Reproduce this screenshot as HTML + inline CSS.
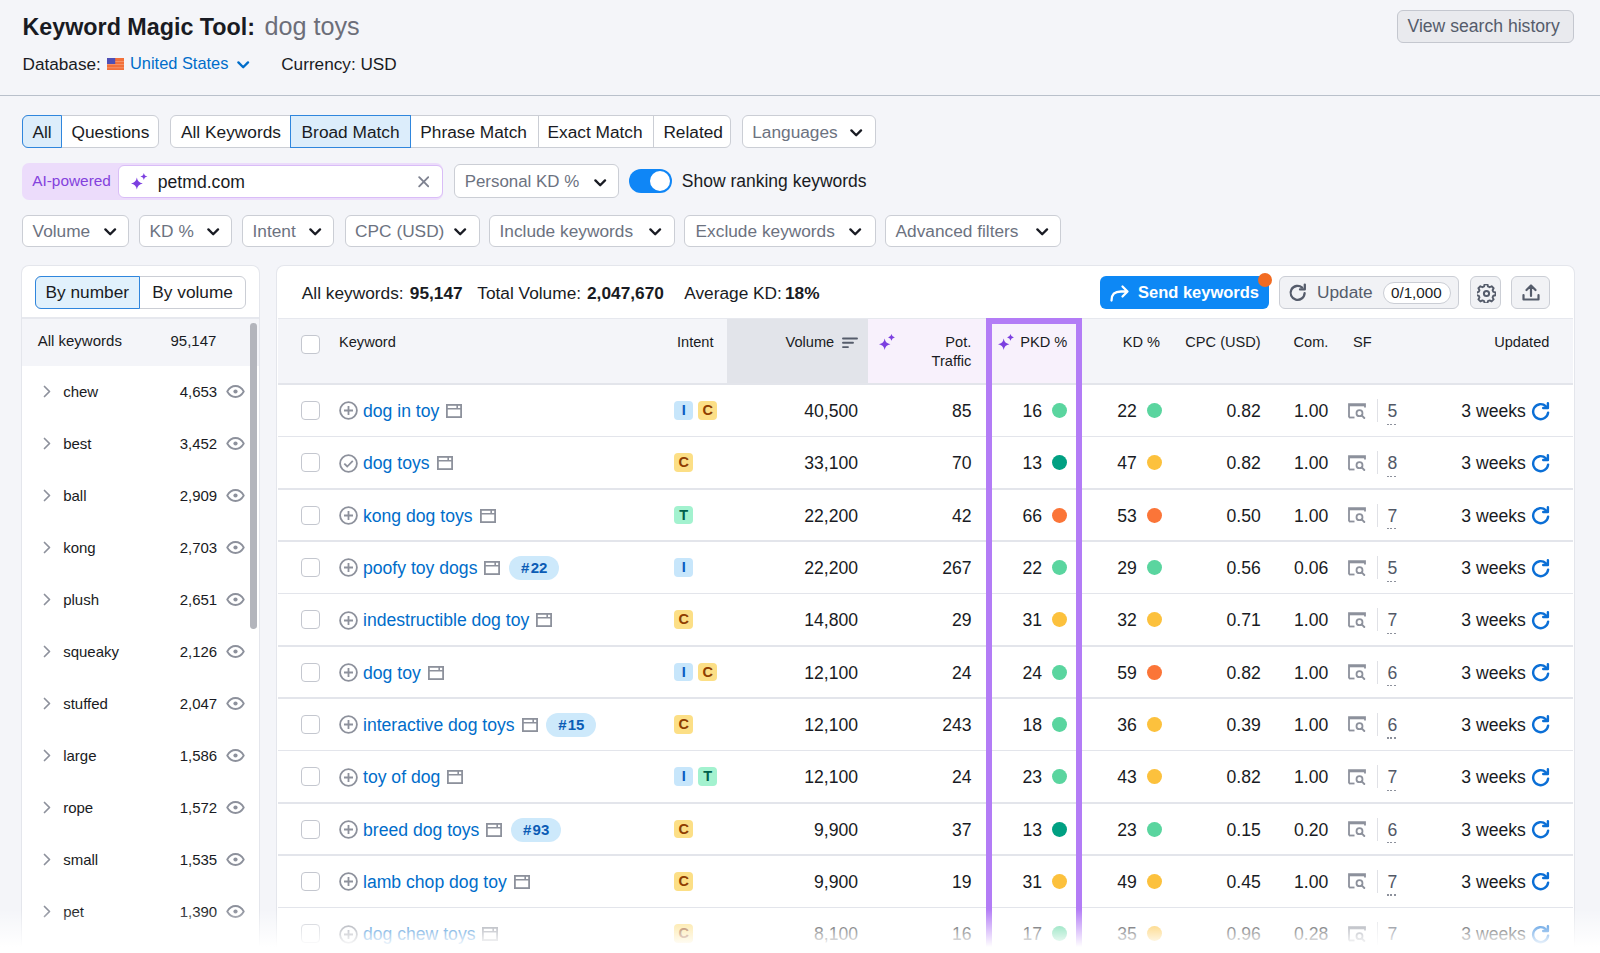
<!DOCTYPE html>
<html><head><meta charset="utf-8"><title>Keyword Magic Tool</title>
<style>
html,body{margin:0;padding:0;}
body{width:1600px;height:953px;overflow:hidden;position:relative;background:#f4f5f9;font-family:"Liberation Sans",sans-serif;color:#191b23;}
.t{position:absolute;white-space:nowrap;line-height:1;}
.b{position:absolute;}
.ib{width:18.7px;height:18.7px;border-radius:4px;font-size:14.5px;font-weight:bold;line-height:19.5px;text-align:center;}
.serp{margin-left:7px;vertical-align:-1px}
.kb{position:relative;display:inline-block;width:58.9px;height:0}
.kb i{position:absolute;left:8.6px;top:-17.9px;width:50.3px;height:23.7px;border-radius:12px;background:#cde9fb;color:#0b5cb5;font-size:15px;font-weight:bold;font-style:normal;text-align:center;line-height:24.5px}
</style></head><body>
<div class="t" style="left:22.50px;top:16.00px;font-size:23.3px;color:#191b23;font-weight:bold;">Keyword Magic Tool:</div>
<div class="t" style="left:264.50px;top:14.00px;font-size:25.2px;color:#6c6e79;">dog toys</div>
<div class="t" style="left:22.50px;top:56.00px;font-size:17.2px;color:#191b23;">Database:</div>
<svg class="b" style="left:107.00px;top:58.00px" width="17" height="12" viewBox="0 0 17 12"><rect width="17" height="12" fill="#f2703a"/><rect y="3" width="17" height="0.8" fill="#f59a72"/><rect y="6.2" width="17" height="0.8" fill="#f59a72"/><rect y="9.4" width="17" height="0.8" fill="#f59a72"/><rect width="8.2" height="6" fill="#4f4fb5"/></svg>
<div class="t" style="left:130.00px;top:55.00px;font-size:16.4px;color:#006dca;">United States</div>
<svg class="b" style="left:236.50px;top:61.00px" width="13" height="8" viewBox="0 0 13 8"><path d="M1.4 1.4 L6.2 6.2 L11 1.4" fill="none" stroke="#006dca" stroke-width="2.3" stroke-linecap="round" stroke-linejoin="round"/></svg>
<div class="t" style="left:281.20px;top:56.00px;font-size:17.2px;color:#191b23;">Currency: USD</div>
<div class="b" style="left:1396.50px;top:10.30px;width:177.00px;height:32.30px;background:#e9eaee;border:1px solid #c4c7cf;border-radius:6px;box-sizing:border-box"></div>
<div class="t" style="left:1407.50px;top:18.00px;font-size:17.6px;color:#555c6b;">View search history</div>
<div class="b" style="left:0.00px;top:94.80px;width:1600.00px;height:1.50px;background:#b9c0cb"></div>
<div class="b" style="left:22.20px;top:115.20px;width:137.30px;height:33.30px;background:#fff;border:1px solid #cbced5;border-radius:6px;box-sizing:border-box"></div>
<div class="b" style="left:22.20px;top:115.20px;width:39.80px;height:33.30px;background:#dcedfb;border:1.5px solid #2f86dd;border-radius:6px 0 0 6px;box-sizing:border-box"></div>
<div class="t" style="left:32.50px;top:124.00px;font-size:17.3px;color:#191b23;">All</div>
<div class="t" style="left:71.50px;top:124.00px;font-size:17.3px;color:#191b23;">Questions</div>
<div class="b" style="left:169.80px;top:115.20px;width:561.50px;height:33.30px;background:#fff;border:1px solid #cbced5;border-radius:6px;box-sizing:border-box"></div>
<div class="b" style="left:290.30px;top:115.20px;width:120.40px;height:33.30px;background:#dcedfb;border:1.5px solid #2f86dd;box-sizing:border-box"></div>
<div class="b" style="left:537.50px;top:115.20px;width:1.00px;height:33.30px;background:#cbced5"></div>
<div class="b" style="left:653.00px;top:115.20px;width:1.00px;height:33.30px;background:#cbced5"></div>
<div class="t" style="left:181.00px;top:124.00px;font-size:17.3px;color:#191b23;">All Keywords</div>
<div class="t" style="left:301.60px;top:124.00px;font-size:17.3px;color:#191b23;">Broad Match</div>
<div class="t" style="left:420.30px;top:124.00px;font-size:17.3px;color:#191b23;">Phrase Match</div>
<div class="t" style="left:547.50px;top:124.00px;font-size:17.3px;color:#191b23;">Exact Match</div>
<div class="t" style="left:663.40px;top:124.00px;font-size:17.3px;color:#191b23;">Related</div>
<div class="b" style="left:741.60px;top:115.20px;width:134.40px;height:33.30px;background:#fff;border:1px solid #cbced5;border-radius:6px;box-sizing:border-box"></div>
<div class="t" style="left:752.20px;top:124.00px;font-size:17.3px;color:#6c727f;">Languages</div>
<svg class="b" style="left:850.00px;top:129.00px" width="13" height="8" viewBox="0 0 13 8"><path d="M1.4 1.4 L6.2 6.2 L11 1.4" fill="none" stroke="#191b23" stroke-width="2.3" stroke-linecap="round" stroke-linejoin="round"/></svg>
<div class="b" style="left:22.20px;top:162.50px;width:420.80px;height:37.50px;background:#ecdcfb;border-radius:7px"></div>
<div class="t" style="left:32.20px;top:173.00px;font-size:15.4px;color:#8442dd;">AI-powered</div>
<div class="b" style="left:118.40px;top:165.30px;width:324.60px;height:32.50px;background:#fff;border:1.5px solid #d9bdf7;border-radius:6px;box-sizing:border-box"></div>
<svg class="b" style="left:130.50px;top:173.20px" width="17" height="17" viewBox="0 0 16 16"><path d="M5.50 4.30 Q6.25 9.15 11.10 9.90 Q6.25 10.65 5.50 15.50 Q4.75 10.65 -0.10 9.90 Q4.75 9.15 5.50 4.30Z M12.10 0.00 Q12.55 2.85 15.40 3.30 Q12.55 3.75 12.10 6.60 Q11.65 3.75 8.80 3.30 Q11.65 2.85 12.10 0.00Z" fill="#7c3fe0"/></svg>
<div class="t" style="left:157.80px;top:174.00px;font-size:17.6px;color:#191b23;">petmd.com</div>
<svg class="b" style="left:417.50px;top:176.00px" width="11.5" height="11.5" viewBox="0 0 11.5 11.5"><path d="M1.2 1.2 L10.3 10.3 M10.3 1.2 L1.2 10.3" stroke="#7f8391" stroke-width="1.9" stroke-linecap="round"/></svg>
<div class="b" style="left:453.80px;top:164.40px;width:165.60px;height:33.40px;background:#fff;border:1px solid #cbced5;border-radius:6px;box-sizing:border-box"></div>
<div class="t" style="left:464.70px;top:174.00px;font-size:16.9px;color:#6c727f;">Personal KD %</div>
<svg class="b" style="left:594.00px;top:179.00px" width="13" height="8" viewBox="0 0 13 8"><path d="M1.4 1.4 L6.2 6.2 L11 1.4" fill="none" stroke="#191b23" stroke-width="2.3" stroke-linecap="round" stroke-linejoin="round"/></svg>
<div class="b" style="left:628.90px;top:169.40px;width:42.80px;height:23.40px;background:#0f86f6;border-radius:12px"></div>
<div class="b" style="left:650.00px;top:170.60px;width:20.40px;height:20.30px;background:#fff;border-radius:50%"></div>
<div class="t" style="left:681.75px;top:173.00px;font-size:17.5px;color:#191b23;">Show ranking keywords</div>
<div class="b" style="left:22.40px;top:214.60px;width:107.10px;height:32.90px;background:#fff;border:1px solid #cbced5;border-radius:6px;box-sizing:border-box"></div>
<div class="t" style="left:32.60px;top:223.00px;font-size:17.3px;color:#6c727f;">Volume</div>
<svg class="b" style="left:104.00px;top:228.00px" width="13" height="8" viewBox="0 0 13 8"><path d="M1.4 1.4 L6.2 6.2 L11 1.4" fill="none" stroke="#191b23" stroke-width="2.3" stroke-linecap="round" stroke-linejoin="round"/></svg>
<div class="b" style="left:139.10px;top:214.60px;width:93.00px;height:32.90px;background:#fff;border:1px solid #cbced5;border-radius:6px;box-sizing:border-box"></div>
<div class="t" style="left:149.60px;top:223.00px;font-size:17.3px;color:#6c727f;">KD %</div>
<svg class="b" style="left:206.50px;top:228.00px" width="13" height="8" viewBox="0 0 13 8"><path d="M1.4 1.4 L6.2 6.2 L11 1.4" fill="none" stroke="#191b23" stroke-width="2.3" stroke-linecap="round" stroke-linejoin="round"/></svg>
<div class="b" style="left:242.00px;top:214.60px;width:92.40px;height:32.90px;background:#fff;border:1px solid #cbced5;border-radius:6px;box-sizing:border-box"></div>
<div class="t" style="left:252.50px;top:223.00px;font-size:17.3px;color:#6c727f;">Intent</div>
<svg class="b" style="left:308.50px;top:228.00px" width="13" height="8" viewBox="0 0 13 8"><path d="M1.4 1.4 L6.2 6.2 L11 1.4" fill="none" stroke="#191b23" stroke-width="2.3" stroke-linecap="round" stroke-linejoin="round"/></svg>
<div class="b" style="left:344.60px;top:214.60px;width:135.00px;height:32.90px;background:#fff;border:1px solid #cbced5;border-radius:6px;box-sizing:border-box"></div>
<div class="t" style="left:355.10px;top:223.00px;font-size:17.3px;color:#6c727f;">CPC (USD)</div>
<svg class="b" style="left:453.50px;top:228.00px" width="13" height="8" viewBox="0 0 13 8"><path d="M1.4 1.4 L6.2 6.2 L11 1.4" fill="none" stroke="#191b23" stroke-width="2.3" stroke-linecap="round" stroke-linejoin="round"/></svg>
<div class="b" style="left:489.40px;top:214.60px;width:185.60px;height:32.90px;background:#fff;border:1px solid #cbced5;border-radius:6px;box-sizing:border-box"></div>
<div class="t" style="left:499.50px;top:223.00px;font-size:17.3px;color:#6c727f;">Include keywords</div>
<svg class="b" style="left:648.70px;top:228.00px" width="13" height="8" viewBox="0 0 13 8"><path d="M1.4 1.4 L6.2 6.2 L11 1.4" fill="none" stroke="#191b23" stroke-width="2.3" stroke-linecap="round" stroke-linejoin="round"/></svg>
<div class="b" style="left:684.40px;top:214.60px;width:191.20px;height:32.90px;background:#fff;border:1px solid #cbced5;border-radius:6px;box-sizing:border-box"></div>
<div class="t" style="left:695.60px;top:223.00px;font-size:17.3px;color:#6c727f;">Exclude keywords</div>
<svg class="b" style="left:849.30px;top:228.00px" width="13" height="8" viewBox="0 0 13 8"><path d="M1.4 1.4 L6.2 6.2 L11 1.4" fill="none" stroke="#191b23" stroke-width="2.3" stroke-linecap="round" stroke-linejoin="round"/></svg>
<div class="b" style="left:885.00px;top:214.60px;width:176.20px;height:32.90px;background:#fff;border:1px solid #cbced5;border-radius:6px;box-sizing:border-box"></div>
<div class="t" style="left:895.50px;top:223.00px;font-size:17.3px;color:#6c727f;">Advanced filters</div>
<svg class="b" style="left:1035.50px;top:228.00px" width="13" height="8" viewBox="0 0 13 8"><path d="M1.4 1.4 L6.2 6.2 L11 1.4" fill="none" stroke="#191b23" stroke-width="2.3" stroke-linecap="round" stroke-linejoin="round"/></svg>
<div class="b" style="left:22.00px;top:266.40px;width:236.50px;height:733.60px;background:#fff;border-radius:7px;box-shadow:0 0 0 1px #e4e6ec"></div>
<div class="b" style="left:34.80px;top:275.90px;width:211.00px;height:33.10px;background:#fff;border:1px solid #cbced5;border-radius:6px;box-sizing:border-box"></div>
<div class="b" style="left:34.80px;top:275.90px;width:105.70px;height:33.10px;background:#e1f1fc;border:1.5px solid #2f86dd;border-radius:6px 0 0 6px;box-sizing:border-box"></div>
<div class="t" style="left:45.50px;top:284.00px;font-size:17.3px;color:#191b23;">By number</div>
<div class="t" style="left:152.30px;top:284.00px;font-size:17.3px;color:#191b23;">By volume</div>
<div class="b" style="left:22.00px;top:317.00px;width:236.50px;height:2.00px;background:#e6e8ee"></div>
<div class="b" style="left:22.00px;top:319.00px;width:236.50px;height:46.70px;background:#f4f5f9"></div>
<div class="t" style="left:37.70px;top:333.00px;font-size:15.0px;color:#191b23;">All keywords</div>
<div class="t" style="right:1383.60px;top:333.00px;font-size:15.0px;color:#191b23;">95,147</div>
<div class="b" style="left:250.30px;top:322.60px;width:6.70px;height:306.40px;background:#b3b5bc;border-radius:3.4px"></div>
<svg class="b" style="left:42.50px;top:385.00px" width="8" height="13" viewBox="0 0 8 13"><path d="M1.5 1.5 L6.5 6.5 L1.5 11.5" fill="none" stroke="#8d919c" stroke-width="1.7" stroke-linecap="round" stroke-linejoin="round"/></svg>
<div class="t" style="left:63.20px;top:384.00px;font-size:15.0px;color:#191b23;">chew</div>
<div class="t" style="right:1382.80px;top:384.00px;font-size:15.0px;color:#191b23;">4,653</div>
<svg class="b" style="left:225.50px;top:385.00px" width="19" height="13" viewBox="0 0 19 13"><path d="M1.2 6.5 C3.6 2.4 6.4 1 9.5 1 C12.6 1 15.4 2.4 17.8 6.5 C15.4 10.6 12.6 12 9.5 12 C6.4 12 3.6 10.6 1.2 6.5Z" fill="none" stroke="#8d919c" stroke-width="1.8" stroke-linejoin="round"/><circle cx="9.5" cy="6.5" r="2.1" fill="#8d919c"/></svg>
<svg class="b" style="left:42.50px;top:437.00px" width="8" height="13" viewBox="0 0 8 13"><path d="M1.5 1.5 L6.5 6.5 L1.5 11.5" fill="none" stroke="#8d919c" stroke-width="1.7" stroke-linecap="round" stroke-linejoin="round"/></svg>
<div class="t" style="left:63.20px;top:436.00px;font-size:15.0px;color:#191b23;">best</div>
<div class="t" style="right:1382.80px;top:436.00px;font-size:15.0px;color:#191b23;">3,452</div>
<svg class="b" style="left:225.50px;top:437.00px" width="19" height="13" viewBox="0 0 19 13"><path d="M1.2 6.5 C3.6 2.4 6.4 1 9.5 1 C12.6 1 15.4 2.4 17.8 6.5 C15.4 10.6 12.6 12 9.5 12 C6.4 12 3.6 10.6 1.2 6.5Z" fill="none" stroke="#8d919c" stroke-width="1.8" stroke-linejoin="round"/><circle cx="9.5" cy="6.5" r="2.1" fill="#8d919c"/></svg>
<svg class="b" style="left:42.50px;top:489.00px" width="8" height="13" viewBox="0 0 8 13"><path d="M1.5 1.5 L6.5 6.5 L1.5 11.5" fill="none" stroke="#8d919c" stroke-width="1.7" stroke-linecap="round" stroke-linejoin="round"/></svg>
<div class="t" style="left:63.20px;top:488.00px;font-size:15.0px;color:#191b23;">ball</div>
<div class="t" style="right:1382.80px;top:488.00px;font-size:15.0px;color:#191b23;">2,909</div>
<svg class="b" style="left:225.50px;top:489.00px" width="19" height="13" viewBox="0 0 19 13"><path d="M1.2 6.5 C3.6 2.4 6.4 1 9.5 1 C12.6 1 15.4 2.4 17.8 6.5 C15.4 10.6 12.6 12 9.5 12 C6.4 12 3.6 10.6 1.2 6.5Z" fill="none" stroke="#8d919c" stroke-width="1.8" stroke-linejoin="round"/><circle cx="9.5" cy="6.5" r="2.1" fill="#8d919c"/></svg>
<svg class="b" style="left:42.50px;top:541.00px" width="8" height="13" viewBox="0 0 8 13"><path d="M1.5 1.5 L6.5 6.5 L1.5 11.5" fill="none" stroke="#8d919c" stroke-width="1.7" stroke-linecap="round" stroke-linejoin="round"/></svg>
<div class="t" style="left:63.20px;top:540.00px;font-size:15.0px;color:#191b23;">kong</div>
<div class="t" style="right:1382.80px;top:540.00px;font-size:15.0px;color:#191b23;">2,703</div>
<svg class="b" style="left:225.50px;top:541.00px" width="19" height="13" viewBox="0 0 19 13"><path d="M1.2 6.5 C3.6 2.4 6.4 1 9.5 1 C12.6 1 15.4 2.4 17.8 6.5 C15.4 10.6 12.6 12 9.5 12 C6.4 12 3.6 10.6 1.2 6.5Z" fill="none" stroke="#8d919c" stroke-width="1.8" stroke-linejoin="round"/><circle cx="9.5" cy="6.5" r="2.1" fill="#8d919c"/></svg>
<svg class="b" style="left:42.50px;top:593.00px" width="8" height="13" viewBox="0 0 8 13"><path d="M1.5 1.5 L6.5 6.5 L1.5 11.5" fill="none" stroke="#8d919c" stroke-width="1.7" stroke-linecap="round" stroke-linejoin="round"/></svg>
<div class="t" style="left:63.20px;top:592.00px;font-size:15.0px;color:#191b23;">plush</div>
<div class="t" style="right:1382.80px;top:592.00px;font-size:15.0px;color:#191b23;">2,651</div>
<svg class="b" style="left:225.50px;top:593.00px" width="19" height="13" viewBox="0 0 19 13"><path d="M1.2 6.5 C3.6 2.4 6.4 1 9.5 1 C12.6 1 15.4 2.4 17.8 6.5 C15.4 10.6 12.6 12 9.5 12 C6.4 12 3.6 10.6 1.2 6.5Z" fill="none" stroke="#8d919c" stroke-width="1.8" stroke-linejoin="round"/><circle cx="9.5" cy="6.5" r="2.1" fill="#8d919c"/></svg>
<svg class="b" style="left:42.50px;top:645.00px" width="8" height="13" viewBox="0 0 8 13"><path d="M1.5 1.5 L6.5 6.5 L1.5 11.5" fill="none" stroke="#8d919c" stroke-width="1.7" stroke-linecap="round" stroke-linejoin="round"/></svg>
<div class="t" style="left:63.20px;top:644.00px;font-size:15.0px;color:#191b23;">squeaky</div>
<div class="t" style="right:1382.80px;top:644.00px;font-size:15.0px;color:#191b23;">2,126</div>
<svg class="b" style="left:225.50px;top:645.00px" width="19" height="13" viewBox="0 0 19 13"><path d="M1.2 6.5 C3.6 2.4 6.4 1 9.5 1 C12.6 1 15.4 2.4 17.8 6.5 C15.4 10.6 12.6 12 9.5 12 C6.4 12 3.6 10.6 1.2 6.5Z" fill="none" stroke="#8d919c" stroke-width="1.8" stroke-linejoin="round"/><circle cx="9.5" cy="6.5" r="2.1" fill="#8d919c"/></svg>
<svg class="b" style="left:42.50px;top:697.00px" width="8" height="13" viewBox="0 0 8 13"><path d="M1.5 1.5 L6.5 6.5 L1.5 11.5" fill="none" stroke="#8d919c" stroke-width="1.7" stroke-linecap="round" stroke-linejoin="round"/></svg>
<div class="t" style="left:63.20px;top:696.00px;font-size:15.0px;color:#191b23;">stuffed</div>
<div class="t" style="right:1382.80px;top:696.00px;font-size:15.0px;color:#191b23;">2,047</div>
<svg class="b" style="left:225.50px;top:697.00px" width="19" height="13" viewBox="0 0 19 13"><path d="M1.2 6.5 C3.6 2.4 6.4 1 9.5 1 C12.6 1 15.4 2.4 17.8 6.5 C15.4 10.6 12.6 12 9.5 12 C6.4 12 3.6 10.6 1.2 6.5Z" fill="none" stroke="#8d919c" stroke-width="1.8" stroke-linejoin="round"/><circle cx="9.5" cy="6.5" r="2.1" fill="#8d919c"/></svg>
<svg class="b" style="left:42.50px;top:749.00px" width="8" height="13" viewBox="0 0 8 13"><path d="M1.5 1.5 L6.5 6.5 L1.5 11.5" fill="none" stroke="#8d919c" stroke-width="1.7" stroke-linecap="round" stroke-linejoin="round"/></svg>
<div class="t" style="left:63.20px;top:748.00px;font-size:15.0px;color:#191b23;">large</div>
<div class="t" style="right:1382.80px;top:748.00px;font-size:15.0px;color:#191b23;">1,586</div>
<svg class="b" style="left:225.50px;top:749.00px" width="19" height="13" viewBox="0 0 19 13"><path d="M1.2 6.5 C3.6 2.4 6.4 1 9.5 1 C12.6 1 15.4 2.4 17.8 6.5 C15.4 10.6 12.6 12 9.5 12 C6.4 12 3.6 10.6 1.2 6.5Z" fill="none" stroke="#8d919c" stroke-width="1.8" stroke-linejoin="round"/><circle cx="9.5" cy="6.5" r="2.1" fill="#8d919c"/></svg>
<svg class="b" style="left:42.50px;top:801.00px" width="8" height="13" viewBox="0 0 8 13"><path d="M1.5 1.5 L6.5 6.5 L1.5 11.5" fill="none" stroke="#8d919c" stroke-width="1.7" stroke-linecap="round" stroke-linejoin="round"/></svg>
<div class="t" style="left:63.20px;top:800.00px;font-size:15.0px;color:#191b23;">rope</div>
<div class="t" style="right:1382.80px;top:800.00px;font-size:15.0px;color:#191b23;">1,572</div>
<svg class="b" style="left:225.50px;top:801.00px" width="19" height="13" viewBox="0 0 19 13"><path d="M1.2 6.5 C3.6 2.4 6.4 1 9.5 1 C12.6 1 15.4 2.4 17.8 6.5 C15.4 10.6 12.6 12 9.5 12 C6.4 12 3.6 10.6 1.2 6.5Z" fill="none" stroke="#8d919c" stroke-width="1.8" stroke-linejoin="round"/><circle cx="9.5" cy="6.5" r="2.1" fill="#8d919c"/></svg>
<svg class="b" style="left:42.50px;top:853.00px" width="8" height="13" viewBox="0 0 8 13"><path d="M1.5 1.5 L6.5 6.5 L1.5 11.5" fill="none" stroke="#8d919c" stroke-width="1.7" stroke-linecap="round" stroke-linejoin="round"/></svg>
<div class="t" style="left:63.20px;top:852.00px;font-size:15.0px;color:#191b23;">small</div>
<div class="t" style="right:1382.80px;top:852.00px;font-size:15.0px;color:#191b23;">1,535</div>
<svg class="b" style="left:225.50px;top:853.00px" width="19" height="13" viewBox="0 0 19 13"><path d="M1.2 6.5 C3.6 2.4 6.4 1 9.5 1 C12.6 1 15.4 2.4 17.8 6.5 C15.4 10.6 12.6 12 9.5 12 C6.4 12 3.6 10.6 1.2 6.5Z" fill="none" stroke="#8d919c" stroke-width="1.8" stroke-linejoin="round"/><circle cx="9.5" cy="6.5" r="2.1" fill="#8d919c"/></svg>
<svg class="b" style="left:42.50px;top:905.00px" width="8" height="13" viewBox="0 0 8 13"><path d="M1.5 1.5 L6.5 6.5 L1.5 11.5" fill="none" stroke="#8d919c" stroke-width="1.7" stroke-linecap="round" stroke-linejoin="round"/></svg>
<div class="t" style="left:63.20px;top:904.00px;font-size:15.0px;color:#191b23;">pet</div>
<div class="t" style="right:1382.80px;top:904.00px;font-size:15.0px;color:#191b23;">1,390</div>
<svg class="b" style="left:225.50px;top:905.00px" width="19" height="13" viewBox="0 0 19 13"><path d="M1.2 6.5 C3.6 2.4 6.4 1 9.5 1 C12.6 1 15.4 2.4 17.8 6.5 C15.4 10.6 12.6 12 9.5 12 C6.4 12 3.6 10.6 1.2 6.5Z" fill="none" stroke="#8d919c" stroke-width="1.8" stroke-linejoin="round"/><circle cx="9.5" cy="6.5" r="2.1" fill="#8d919c"/></svg>
<svg class="b" style="left:42.50px;top:957.00px" width="8" height="13" viewBox="0 0 8 13"><path d="M1.5 1.5 L6.5 6.5 L1.5 11.5" fill="none" stroke="#8d919c" stroke-width="1.7" stroke-linecap="round" stroke-linejoin="round"/></svg>
<div class="t" style="left:63.20px;top:956.00px;font-size:15.0px;color:#191b23;">interactive</div>
<div class="t" style="right:1382.80px;top:956.00px;font-size:15.0px;color:#191b23;">1,200</div>
<svg class="b" style="left:225.50px;top:957.00px" width="19" height="13" viewBox="0 0 19 13"><path d="M1.2 6.5 C3.6 2.4 6.4 1 9.5 1 C12.6 1 15.4 2.4 17.8 6.5 C15.4 10.6 12.6 12 9.5 12 C6.4 12 3.6 10.6 1.2 6.5Z" fill="none" stroke="#8d919c" stroke-width="1.8" stroke-linejoin="round"/><circle cx="9.5" cy="6.5" r="2.1" fill="#8d919c"/></svg>
<div class="b" style="left:277.00px;top:265.80px;width:1296.50px;height:734.20px;background:#fff;border-radius:7px;box-shadow:0 0 0 1px #e4e6ec"></div>
<div class="t" style="left:301.80px;top:285.00px;font-size:17.3px;color:#191b23;">All keywords:</div>
<div class="t" style="left:409.80px;top:285.00px;font-size:17.3px;color:#191b23;font-weight:bold;">95,147</div>
<div class="t" style="left:477.30px;top:285.00px;font-size:17.3px;color:#191b23;">Total Volume:</div>
<div class="t" style="left:587.00px;top:285.00px;font-size:17.3px;color:#191b23;font-weight:bold;">2,047,670</div>
<div class="t" style="left:684.20px;top:285.00px;font-size:17.3px;color:#191b23;">Average KD:</div>
<div class="t" style="left:785.00px;top:285.00px;font-size:17.3px;color:#191b23;font-weight:bold;">18%</div>
<div class="b" style="left:1100.20px;top:276.00px;width:169.30px;height:33.00px;background:#0d88f5;border-radius:6px"></div>
<svg class="b" style="left:1109.00px;top:284.00px" width="21" height="18" viewBox="0 0 21 18"><path d="M2.5 16.5 C2.5 10 5.5 7.5 12 7.5 L18 7.5 M13.5 2.5 L18.5 7.5 L13.5 12.5" fill="none" stroke="#fff" stroke-width="2.3" stroke-linecap="round" stroke-linejoin="round"/></svg>
<div class="t" style="left:1138.00px;top:284.00px;font-size:16.5px;color:#fff;font-weight:bold;">Send keywords</div>
<div class="b" style="left:1257.50px;top:272.80px;width:14.50px;height:14.50px;background:#f26b21;border-radius:50%"></div>
<div class="b" style="left:1279.30px;top:276.20px;width:180.20px;height:32.40px;background:#f1f2f5;border:1px solid #cbced5;border-radius:6px;box-sizing:border-box"></div>
<svg class="b" style="left:1288.00px;top:283.00px" width="20" height="20" viewBox="0 0 20 20"><path d="M16.6 10.2 A7 7 0 1 1 14.2 4.6" fill="none" stroke="#555c6b" stroke-width="2.3" stroke-linecap="round"/><path d="M16.8 1.6 V6.4 H12" fill="none" stroke="#555c6b" stroke-width="2.3" stroke-linecap="round" stroke-linejoin="round"/></svg>
<div class="t" style="left:1317.00px;top:284.00px;font-size:17.3px;color:#555c6b;">Update</div>
<div class="b" style="left:1383.40px;top:281.50px;width:67.20px;height:22.30px;background:#fff;border:1px solid #cbced5;border-radius:12px;box-sizing:border-box"></div>
<div class="t" style="left:1391.00px;top:285.00px;font-size:15.2px;color:#191b23;">0/1,000</div>
<div class="b" style="left:1469.60px;top:276.20px;width:31.90px;height:32.40px;background:#f1f2f5;border:1px solid #cbced5;border-radius:6px;box-sizing:border-box"></div>
<svg class="b" style="left:1476.50px;top:283.50px" width="19" height="19" viewBox="0 0 19 19"><g fill="none" stroke="#555c6b" stroke-width="2"><path d="M8 1.5 h3 l0.5 2.3 l1.8 0.9 l2.1-1.1 l2.1 2.1 l-1.1 2.1 l0.8 1.8 l2.3 0.5 v3 l-2.3 0.5 l-0.8 1.8 l1.1 2.1 l-2.1 2.1 l-2.1-1.1 l-1.8 0.8 l-0.5 2.3 h-3 l-0.5-2.3 l-1.8-0.8 l-2.1 1.1 l-2.1-2.1 l1.1-2.1 l-0.8-1.8 l-2.3-0.5 v-3 l2.3-0.5 l0.8-1.8 l-1.1-2.1 l2.1-2.1 l2.1 1.1 l1.8-0.9 z" transform="translate(0 -1.2) scale(0.95)" stroke-linejoin="round"/><circle cx="9.5" cy="9.5" r="2.6"/></g></svg>
<div class="b" style="left:1511.20px;top:276.20px;width:38.40px;height:32.40px;background:#f1f2f5;border:1px solid #cbced5;border-radius:6px;box-sizing:border-box"></div>
<svg class="b" style="left:1520.50px;top:283.00px" width="20" height="19" viewBox="0 0 20 19"><path d="M10 13 V2.5 M5.5 7 L10 2.5 L14.5 7 M2.5 12 V16.5 H17.5 V12" fill="none" stroke="#555c6b" stroke-width="2.2" stroke-linecap="round" stroke-linejoin="round"/></svg>
<div class="b" style="left:278.00px;top:318.00px;width:1294.50px;height:1.00px;background:#e6e8ee"></div>
<div class="b" style="left:278.00px;top:319.00px;width:1294.50px;height:65.00px;background:#f4f5f9"></div>
<div class="b" style="left:727.00px;top:319.00px;width:141.00px;height:65.00px;background:#e2e4ea"></div>
<div class="b" style="left:868.00px;top:319.00px;width:118.00px;height:65.00px;background:#f8f1fc"></div>
<div class="b" style="left:986.00px;top:319.00px;width:96.00px;height:65.00px;background:#f8f1fc"></div>
<div class="b" style="left:278.00px;top:383.00px;width:1294.50px;height:1.50px;background:#e3e5eb"></div>
<div class="b" style="left:301.00px;top:334.50px;width:19.00px;height:19.00px;background:#fff;border:1.3px solid #c4c7cf;border-radius:4px;box-sizing:border-box"></div>
<div class="t" style="left:339.00px;top:335.00px;font-size:14.6px;color:#191b23;">Keyword</div>
<div class="t" style="left:677.00px;top:335.00px;font-size:14.6px;color:#191b23;">Intent</div>
<div class="t" style="right:765.80px;top:335.00px;font-size:14.6px;color:#191b23;">Volume</div>
<svg class="b" style="left:841.50px;top:337.00px" width="16" height="12" viewBox="0 0 16 12"><path d="M1 1.5 H15 M1 5.8 H11 M1 10.1 H6" fill="none" stroke="#555c6b" stroke-width="1.9" stroke-linecap="round"/></svg>
<svg class="b" style="left:878.50px;top:334.00px" width="16.5" height="16.5" viewBox="0 0 16 16"><path d="M5.50 4.30 Q6.25 9.15 11.10 9.90 Q6.25 10.65 5.50 15.50 Q4.75 10.65 -0.10 9.90 Q4.75 9.15 5.50 4.30Z M12.10 0.00 Q12.55 2.85 15.40 3.30 Q12.55 3.75 12.10 6.60 Q11.65 3.75 8.80 3.30 Q11.65 2.85 12.10 0.00Z" fill="#7c3fe0"/></svg>
<div class="t" style="right:628.70px;top:335.00px;font-size:14.6px;color:#191b23;">Pot.</div>
<div class="t" style="right:628.70px;top:354.00px;font-size:14.6px;color:#191b23;">Traffic</div>
<svg class="b" style="left:997.50px;top:334.00px" width="16.5" height="16.5" viewBox="0 0 16 16"><path d="M5.50 4.30 Q6.25 9.15 11.10 9.90 Q6.25 10.65 5.50 15.50 Q4.75 10.65 -0.10 9.90 Q4.75 9.15 5.50 4.30Z M12.10 0.00 Q12.55 2.85 15.40 3.30 Q12.55 3.75 12.10 6.60 Q11.65 3.75 8.80 3.30 Q11.65 2.85 12.10 0.00Z" fill="#7c3fe0"/></svg>
<div class="t" style="left:1020.30px;top:335.00px;font-size:14.6px;color:#191b23;">PKD %</div>
<div class="t" style="right:440.00px;top:335.00px;font-size:14.6px;color:#191b23;">KD %</div>
<div class="t" style="right:339.30px;top:335.00px;font-size:14.6px;color:#191b23;">CPC (USD)</div>
<div class="t" style="right:271.60px;top:335.00px;font-size:14.6px;color:#191b23;">Com.</div>
<div class="t" style="left:1353.00px;top:335.00px;font-size:14.6px;color:#191b23;">SF</div>
<div class="t" style="right:50.60px;top:335.00px;font-size:14.6px;color:#191b23;">Updated</div>
<div class="b" style="left:278.00px;top:435.82px;width:1294.50px;height:1.50px;background:#e3e5eb"></div>
<div class="b" style="left:301.00px;top:401.06px;width:19.00px;height:19.00px;background:#fff;border:1.3px solid #c4c7cf;border-radius:4px;box-sizing:border-box"></div>
<svg class="b" style="left:338.70px;top:401.36px" width="19" height="19" viewBox="0 0 19 19"><circle cx="9.5" cy="9.5" r="8.4" fill="none" stroke="#8d919c" stroke-width="1.8"/><path d="M9.5 5 V14 M5 9.5 H14" stroke="#8d919c" stroke-width="1.8"/></svg>
<div class="t kw" style="left:363px;top:403px;font-size:17.6px;color:#006dca">dog in toy<svg class="serp" width="16" height="14" viewBox="0 0 16 14"><rect x="0.9" y="0.9" width="14.2" height="12.2" fill="none" stroke="#8d919c" stroke-width="1.8"/><path d="M1 4.8 H15 M11.2 1 V4.8" stroke="#8d919c" stroke-width="1.6"/></svg></div>
<div class="b ib" style="left:674.3px;top:401.16px;background:#c7e6fb;color:#0a5cc2">I</div>
<div class="b ib" style="left:698.3px;top:401.16px;background:#fcdf86;color:#8f3d00">C</div>
<div class="t" style="right:742.00px;top:403.00px;font-size:17.6px;color:#191b23;">40,500</div>
<div class="t" style="right:628.50px;top:403.00px;font-size:17.6px;color:#191b23;">85</div>
<div class="t" style="right:558.00px;top:403.00px;font-size:17.6px;color:#191b23;">16</div>
<div class="b" style="left:1052.20px;top:403.16px;width:14.80px;height:14.80px;background:#5ad59f;border-radius:50%"></div>
<div class="t" style="right:463.20px;top:403.00px;font-size:17.6px;color:#191b23;">22</div>
<div class="b" style="left:1147.00px;top:403.16px;width:14.80px;height:14.80px;background:#5ad59f;border-radius:50%"></div>
<div class="t" style="right:339.20px;top:403.00px;font-size:17.6px;color:#191b23;">0.82</div>
<div class="t" style="right:271.70px;top:403.00px;font-size:17.6px;color:#191b23;">1.00</div>
<svg class="b" style="left:1348.00px;top:402.56px" width="18" height="16" viewBox="0 0 18 16"><path d="M1 14.5 V1.2 H17 V4.5" fill="none" stroke="#8d919c" stroke-width="1.8"/><path d="M1 2.2 H17" stroke="#8d919c" stroke-width="2.2"/><path d="M1 14.5 H6.5" stroke="#8d919c" stroke-width="1.8"/><circle cx="11.5" cy="10.2" r="3" fill="none" stroke="#8d919c" stroke-width="1.8"/><path d="M13.7 12.4 L16.3 15" stroke="#8d919c" stroke-width="1.9" stroke-linecap="round"/></svg>
<div class="b" style="left:1376.50px;top:399.06px;width:1.50px;height:23.00px;background:#e0e1e6"></div>
<div class="t" style="left:1387.40px;top:403.00px;font-size:17.6px;color:#525866;">5</div>
<div class="b" style="left:1387.40px;top:423.56px;width:9.60px;height:1.30px;background:repeating-linear-gradient(90deg,#8d919c 0 2px,transparent 2px 3.3px)"></div>
<div class="t" style="right:74.20px;top:403.00px;font-size:17.6px;color:#191b23;">3 weeks</div>
<svg class="b" style="left:1531.30px;top:401.56px" width="19" height="19" viewBox="0 0 19 19"><path d="M17.1 10.6 A7.5 7.5 0 1 1 14.9 4.3" fill="none" stroke="#0b6fd6" stroke-width="2.4" stroke-linecap="round"/><path d="M16.9 1.3 V6 H12.2" fill="none" stroke="#0b6fd6" stroke-width="2.4" stroke-linecap="round" stroke-linejoin="round"/></svg>
<!--row0:dog in toy|None-->
<div class="b" style="left:278.00px;top:488.14px;width:1294.50px;height:1.50px;background:#e3e5eb"></div>
<div class="b" style="left:301.00px;top:453.38px;width:19.00px;height:19.00px;background:#fff;border:1.3px solid #c4c7cf;border-radius:4px;box-sizing:border-box"></div>
<svg class="b" style="left:338.70px;top:453.68px" width="19" height="19" viewBox="0 0 19 19"><circle cx="9.5" cy="9.5" r="8.4" fill="none" stroke="#8d919c" stroke-width="1.8"/><path d="M5.3 9.6 L8.3 12.5 L13.8 6.8" fill="none" stroke="#8d919c" stroke-width="1.8" stroke-linejoin="round"/></svg>
<div class="t kw" style="left:363px;top:455px;font-size:17.6px;color:#006dca">dog toys<svg class="serp" width="16" height="14" viewBox="0 0 16 14"><rect x="0.9" y="0.9" width="14.2" height="12.2" fill="none" stroke="#8d919c" stroke-width="1.8"/><path d="M1 4.8 H15 M11.2 1 V4.8" stroke="#8d919c" stroke-width="1.6"/></svg></div>
<div class="b ib" style="left:674.3px;top:453.48px;background:#fcdf86;color:#8f3d00">C</div>
<div class="t" style="right:742.00px;top:455.00px;font-size:17.6px;color:#191b23;">33,100</div>
<div class="t" style="right:628.50px;top:455.00px;font-size:17.6px;color:#191b23;">70</div>
<div class="t" style="right:558.00px;top:455.00px;font-size:17.6px;color:#191b23;">13</div>
<div class="b" style="left:1052.20px;top:455.48px;width:14.80px;height:14.80px;background:#00a082;border-radius:50%"></div>
<div class="t" style="right:463.20px;top:455.00px;font-size:17.6px;color:#191b23;">47</div>
<div class="b" style="left:1147.00px;top:455.48px;width:14.80px;height:14.80px;background:#fcc13d;border-radius:50%"></div>
<div class="t" style="right:339.20px;top:455.00px;font-size:17.6px;color:#191b23;">0.82</div>
<div class="t" style="right:271.70px;top:455.00px;font-size:17.6px;color:#191b23;">1.00</div>
<svg class="b" style="left:1348.00px;top:454.88px" width="18" height="16" viewBox="0 0 18 16"><path d="M1 14.5 V1.2 H17 V4.5" fill="none" stroke="#8d919c" stroke-width="1.8"/><path d="M1 2.2 H17" stroke="#8d919c" stroke-width="2.2"/><path d="M1 14.5 H6.5" stroke="#8d919c" stroke-width="1.8"/><circle cx="11.5" cy="10.2" r="3" fill="none" stroke="#8d919c" stroke-width="1.8"/><path d="M13.7 12.4 L16.3 15" stroke="#8d919c" stroke-width="1.9" stroke-linecap="round"/></svg>
<div class="b" style="left:1376.50px;top:451.38px;width:1.50px;height:23.00px;background:#e0e1e6"></div>
<div class="t" style="left:1387.40px;top:455.00px;font-size:17.6px;color:#525866;">8</div>
<div class="b" style="left:1387.40px;top:475.88px;width:9.60px;height:1.30px;background:repeating-linear-gradient(90deg,#8d919c 0 2px,transparent 2px 3.3px)"></div>
<div class="t" style="right:74.20px;top:455.00px;font-size:17.6px;color:#191b23;">3 weeks</div>
<svg class="b" style="left:1531.30px;top:453.88px" width="19" height="19" viewBox="0 0 19 19"><path d="M17.1 10.6 A7.5 7.5 0 1 1 14.9 4.3" fill="none" stroke="#0b6fd6" stroke-width="2.4" stroke-linecap="round"/><path d="M16.9 1.3 V6 H12.2" fill="none" stroke="#0b6fd6" stroke-width="2.4" stroke-linecap="round" stroke-linejoin="round"/></svg>
<!--row1:dog toys|None-->
<div class="b" style="left:278.00px;top:540.46px;width:1294.50px;height:1.50px;background:#e3e5eb"></div>
<div class="b" style="left:301.00px;top:505.70px;width:19.00px;height:19.00px;background:#fff;border:1.3px solid #c4c7cf;border-radius:4px;box-sizing:border-box"></div>
<svg class="b" style="left:338.70px;top:506.00px" width="19" height="19" viewBox="0 0 19 19"><circle cx="9.5" cy="9.5" r="8.4" fill="none" stroke="#8d919c" stroke-width="1.8"/><path d="M9.5 5 V14 M5 9.5 H14" stroke="#8d919c" stroke-width="1.8"/></svg>
<div class="t kw" style="left:363px;top:508px;font-size:17.6px;color:#006dca">kong dog toys<svg class="serp" width="16" height="14" viewBox="0 0 16 14"><rect x="0.9" y="0.9" width="14.2" height="12.2" fill="none" stroke="#8d919c" stroke-width="1.8"/><path d="M1 4.8 H15 M11.2 1 V4.8" stroke="#8d919c" stroke-width="1.6"/></svg></div>
<div class="b ib" style="left:674.3px;top:505.80px;background:#a3f2cf;color:#00604b">T</div>
<div class="t" style="right:742.00px;top:508.00px;font-size:17.6px;color:#191b23;">22,200</div>
<div class="t" style="right:628.50px;top:508.00px;font-size:17.6px;color:#191b23;">42</div>
<div class="t" style="right:558.00px;top:508.00px;font-size:17.6px;color:#191b23;">66</div>
<div class="b" style="left:1052.20px;top:507.80px;width:14.80px;height:14.80px;background:#fb7538;border-radius:50%"></div>
<div class="t" style="right:463.20px;top:508.00px;font-size:17.6px;color:#191b23;">53</div>
<div class="b" style="left:1147.00px;top:507.80px;width:14.80px;height:14.80px;background:#fb7538;border-radius:50%"></div>
<div class="t" style="right:339.20px;top:508.00px;font-size:17.6px;color:#191b23;">0.50</div>
<div class="t" style="right:271.70px;top:508.00px;font-size:17.6px;color:#191b23;">1.00</div>
<svg class="b" style="left:1348.00px;top:507.20px" width="18" height="16" viewBox="0 0 18 16"><path d="M1 14.5 V1.2 H17 V4.5" fill="none" stroke="#8d919c" stroke-width="1.8"/><path d="M1 2.2 H17" stroke="#8d919c" stroke-width="2.2"/><path d="M1 14.5 H6.5" stroke="#8d919c" stroke-width="1.8"/><circle cx="11.5" cy="10.2" r="3" fill="none" stroke="#8d919c" stroke-width="1.8"/><path d="M13.7 12.4 L16.3 15" stroke="#8d919c" stroke-width="1.9" stroke-linecap="round"/></svg>
<div class="b" style="left:1376.50px;top:503.70px;width:1.50px;height:23.00px;background:#e0e1e6"></div>
<div class="t" style="left:1387.40px;top:508.00px;font-size:17.6px;color:#525866;">7</div>
<div class="b" style="left:1387.40px;top:528.20px;width:9.60px;height:1.30px;background:repeating-linear-gradient(90deg,#8d919c 0 2px,transparent 2px 3.3px)"></div>
<div class="t" style="right:74.20px;top:508.00px;font-size:17.6px;color:#191b23;">3 weeks</div>
<svg class="b" style="left:1531.30px;top:506.20px" width="19" height="19" viewBox="0 0 19 19"><path d="M17.1 10.6 A7.5 7.5 0 1 1 14.9 4.3" fill="none" stroke="#0b6fd6" stroke-width="2.4" stroke-linecap="round"/><path d="M16.9 1.3 V6 H12.2" fill="none" stroke="#0b6fd6" stroke-width="2.4" stroke-linecap="round" stroke-linejoin="round"/></svg>
<!--row2:kong dog toys|None-->
<div class="b" style="left:278.00px;top:592.78px;width:1294.50px;height:1.50px;background:#e3e5eb"></div>
<div class="b" style="left:301.00px;top:558.02px;width:19.00px;height:19.00px;background:#fff;border:1.3px solid #c4c7cf;border-radius:4px;box-sizing:border-box"></div>
<svg class="b" style="left:338.70px;top:558.32px" width="19" height="19" viewBox="0 0 19 19"><circle cx="9.5" cy="9.5" r="8.4" fill="none" stroke="#8d919c" stroke-width="1.8"/><path d="M9.5 5 V14 M5 9.5 H14" stroke="#8d919c" stroke-width="1.8"/></svg>
<div class="t kw" style="left:363px;top:560px;font-size:17.6px;color:#006dca">poofy toy dogs<svg class="serp" width="16" height="14" viewBox="0 0 16 14"><rect x="0.9" y="0.9" width="14.2" height="12.2" fill="none" stroke="#8d919c" stroke-width="1.8"/><path d="M1 4.8 H15 M11.2 1 V4.8" stroke="#8d919c" stroke-width="1.6"/></svg><span class="kb"><i>#&#8202;22</i></span></div>
<div class="b ib" style="left:674.3px;top:558.12px;background:#c7e6fb;color:#0a5cc2">I</div>
<div class="t" style="right:742.00px;top:560.00px;font-size:17.6px;color:#191b23;">22,200</div>
<div class="t" style="right:628.50px;top:560.00px;font-size:17.6px;color:#191b23;">267</div>
<div class="t" style="right:558.00px;top:560.00px;font-size:17.6px;color:#191b23;">22</div>
<div class="b" style="left:1052.20px;top:560.12px;width:14.80px;height:14.80px;background:#5ad59f;border-radius:50%"></div>
<div class="t" style="right:463.20px;top:560.00px;font-size:17.6px;color:#191b23;">29</div>
<div class="b" style="left:1147.00px;top:560.12px;width:14.80px;height:14.80px;background:#5ad59f;border-radius:50%"></div>
<div class="t" style="right:339.20px;top:560.00px;font-size:17.6px;color:#191b23;">0.56</div>
<div class="t" style="right:271.70px;top:560.00px;font-size:17.6px;color:#191b23;">0.06</div>
<svg class="b" style="left:1348.00px;top:559.52px" width="18" height="16" viewBox="0 0 18 16"><path d="M1 14.5 V1.2 H17 V4.5" fill="none" stroke="#8d919c" stroke-width="1.8"/><path d="M1 2.2 H17" stroke="#8d919c" stroke-width="2.2"/><path d="M1 14.5 H6.5" stroke="#8d919c" stroke-width="1.8"/><circle cx="11.5" cy="10.2" r="3" fill="none" stroke="#8d919c" stroke-width="1.8"/><path d="M13.7 12.4 L16.3 15" stroke="#8d919c" stroke-width="1.9" stroke-linecap="round"/></svg>
<div class="b" style="left:1376.50px;top:556.02px;width:1.50px;height:23.00px;background:#e0e1e6"></div>
<div class="t" style="left:1387.40px;top:560.00px;font-size:17.6px;color:#525866;">5</div>
<div class="b" style="left:1387.40px;top:580.52px;width:9.60px;height:1.30px;background:repeating-linear-gradient(90deg,#8d919c 0 2px,transparent 2px 3.3px)"></div>
<div class="t" style="right:74.20px;top:560.00px;font-size:17.6px;color:#191b23;">3 weeks</div>
<svg class="b" style="left:1531.30px;top:558.52px" width="19" height="19" viewBox="0 0 19 19"><path d="M17.1 10.6 A7.5 7.5 0 1 1 14.9 4.3" fill="none" stroke="#0b6fd6" stroke-width="2.4" stroke-linecap="round"/><path d="M16.9 1.3 V6 H12.2" fill="none" stroke="#0b6fd6" stroke-width="2.4" stroke-linecap="round" stroke-linejoin="round"/></svg>
<!--row3:poofy toy dogs|#22-->
<div class="b" style="left:278.00px;top:645.10px;width:1294.50px;height:1.50px;background:#e3e5eb"></div>
<div class="b" style="left:301.00px;top:610.34px;width:19.00px;height:19.00px;background:#fff;border:1.3px solid #c4c7cf;border-radius:4px;box-sizing:border-box"></div>
<svg class="b" style="left:338.70px;top:610.64px" width="19" height="19" viewBox="0 0 19 19"><circle cx="9.5" cy="9.5" r="8.4" fill="none" stroke="#8d919c" stroke-width="1.8"/><path d="M9.5 5 V14 M5 9.5 H14" stroke="#8d919c" stroke-width="1.8"/></svg>
<div class="t kw" style="left:363px;top:612px;font-size:17.6px;color:#006dca">indestructible dog toy<svg class="serp" width="16" height="14" viewBox="0 0 16 14"><rect x="0.9" y="0.9" width="14.2" height="12.2" fill="none" stroke="#8d919c" stroke-width="1.8"/><path d="M1 4.8 H15 M11.2 1 V4.8" stroke="#8d919c" stroke-width="1.6"/></svg></div>
<div class="b ib" style="left:674.3px;top:610.44px;background:#fcdf86;color:#8f3d00">C</div>
<div class="t" style="right:742.00px;top:612.00px;font-size:17.6px;color:#191b23;">14,800</div>
<div class="t" style="right:628.50px;top:612.00px;font-size:17.6px;color:#191b23;">29</div>
<div class="t" style="right:558.00px;top:612.00px;font-size:17.6px;color:#191b23;">31</div>
<div class="b" style="left:1052.20px;top:612.44px;width:14.80px;height:14.80px;background:#fcc13d;border-radius:50%"></div>
<div class="t" style="right:463.20px;top:612.00px;font-size:17.6px;color:#191b23;">32</div>
<div class="b" style="left:1147.00px;top:612.44px;width:14.80px;height:14.80px;background:#fcc13d;border-radius:50%"></div>
<div class="t" style="right:339.20px;top:612.00px;font-size:17.6px;color:#191b23;">0.71</div>
<div class="t" style="right:271.70px;top:612.00px;font-size:17.6px;color:#191b23;">1.00</div>
<svg class="b" style="left:1348.00px;top:611.84px" width="18" height="16" viewBox="0 0 18 16"><path d="M1 14.5 V1.2 H17 V4.5" fill="none" stroke="#8d919c" stroke-width="1.8"/><path d="M1 2.2 H17" stroke="#8d919c" stroke-width="2.2"/><path d="M1 14.5 H6.5" stroke="#8d919c" stroke-width="1.8"/><circle cx="11.5" cy="10.2" r="3" fill="none" stroke="#8d919c" stroke-width="1.8"/><path d="M13.7 12.4 L16.3 15" stroke="#8d919c" stroke-width="1.9" stroke-linecap="round"/></svg>
<div class="b" style="left:1376.50px;top:608.34px;width:1.50px;height:23.00px;background:#e0e1e6"></div>
<div class="t" style="left:1387.40px;top:612.00px;font-size:17.6px;color:#525866;">7</div>
<div class="b" style="left:1387.40px;top:632.84px;width:9.60px;height:1.30px;background:repeating-linear-gradient(90deg,#8d919c 0 2px,transparent 2px 3.3px)"></div>
<div class="t" style="right:74.20px;top:612.00px;font-size:17.6px;color:#191b23;">3 weeks</div>
<svg class="b" style="left:1531.30px;top:610.84px" width="19" height="19" viewBox="0 0 19 19"><path d="M17.1 10.6 A7.5 7.5 0 1 1 14.9 4.3" fill="none" stroke="#0b6fd6" stroke-width="2.4" stroke-linecap="round"/><path d="M16.9 1.3 V6 H12.2" fill="none" stroke="#0b6fd6" stroke-width="2.4" stroke-linecap="round" stroke-linejoin="round"/></svg>
<!--row4:indestructible dog toy|None-->
<div class="b" style="left:278.00px;top:697.42px;width:1294.50px;height:1.50px;background:#e3e5eb"></div>
<div class="b" style="left:301.00px;top:662.66px;width:19.00px;height:19.00px;background:#fff;border:1.3px solid #c4c7cf;border-radius:4px;box-sizing:border-box"></div>
<svg class="b" style="left:338.70px;top:662.96px" width="19" height="19" viewBox="0 0 19 19"><circle cx="9.5" cy="9.5" r="8.4" fill="none" stroke="#8d919c" stroke-width="1.8"/><path d="M9.5 5 V14 M5 9.5 H14" stroke="#8d919c" stroke-width="1.8"/></svg>
<div class="t kw" style="left:363px;top:665px;font-size:17.6px;color:#006dca">dog toy<svg class="serp" width="16" height="14" viewBox="0 0 16 14"><rect x="0.9" y="0.9" width="14.2" height="12.2" fill="none" stroke="#8d919c" stroke-width="1.8"/><path d="M1 4.8 H15 M11.2 1 V4.8" stroke="#8d919c" stroke-width="1.6"/></svg></div>
<div class="b ib" style="left:674.3px;top:662.76px;background:#c7e6fb;color:#0a5cc2">I</div>
<div class="b ib" style="left:698.3px;top:662.76px;background:#fcdf86;color:#8f3d00">C</div>
<div class="t" style="right:742.00px;top:665.00px;font-size:17.6px;color:#191b23;">12,100</div>
<div class="t" style="right:628.50px;top:665.00px;font-size:17.6px;color:#191b23;">24</div>
<div class="t" style="right:558.00px;top:665.00px;font-size:17.6px;color:#191b23;">24</div>
<div class="b" style="left:1052.20px;top:664.76px;width:14.80px;height:14.80px;background:#5ad59f;border-radius:50%"></div>
<div class="t" style="right:463.20px;top:665.00px;font-size:17.6px;color:#191b23;">59</div>
<div class="b" style="left:1147.00px;top:664.76px;width:14.80px;height:14.80px;background:#fb7538;border-radius:50%"></div>
<div class="t" style="right:339.20px;top:665.00px;font-size:17.6px;color:#191b23;">0.82</div>
<div class="t" style="right:271.70px;top:665.00px;font-size:17.6px;color:#191b23;">1.00</div>
<svg class="b" style="left:1348.00px;top:664.16px" width="18" height="16" viewBox="0 0 18 16"><path d="M1 14.5 V1.2 H17 V4.5" fill="none" stroke="#8d919c" stroke-width="1.8"/><path d="M1 2.2 H17" stroke="#8d919c" stroke-width="2.2"/><path d="M1 14.5 H6.5" stroke="#8d919c" stroke-width="1.8"/><circle cx="11.5" cy="10.2" r="3" fill="none" stroke="#8d919c" stroke-width="1.8"/><path d="M13.7 12.4 L16.3 15" stroke="#8d919c" stroke-width="1.9" stroke-linecap="round"/></svg>
<div class="b" style="left:1376.50px;top:660.66px;width:1.50px;height:23.00px;background:#e0e1e6"></div>
<div class="t" style="left:1387.40px;top:665.00px;font-size:17.6px;color:#525866;">6</div>
<div class="b" style="left:1387.40px;top:685.16px;width:9.60px;height:1.30px;background:repeating-linear-gradient(90deg,#8d919c 0 2px,transparent 2px 3.3px)"></div>
<div class="t" style="right:74.20px;top:665.00px;font-size:17.6px;color:#191b23;">3 weeks</div>
<svg class="b" style="left:1531.30px;top:663.16px" width="19" height="19" viewBox="0 0 19 19"><path d="M17.1 10.6 A7.5 7.5 0 1 1 14.9 4.3" fill="none" stroke="#0b6fd6" stroke-width="2.4" stroke-linecap="round"/><path d="M16.9 1.3 V6 H12.2" fill="none" stroke="#0b6fd6" stroke-width="2.4" stroke-linecap="round" stroke-linejoin="round"/></svg>
<!--row5:dog toy|None-->
<div class="b" style="left:278.00px;top:749.74px;width:1294.50px;height:1.50px;background:#e3e5eb"></div>
<div class="b" style="left:301.00px;top:714.98px;width:19.00px;height:19.00px;background:#fff;border:1.3px solid #c4c7cf;border-radius:4px;box-sizing:border-box"></div>
<svg class="b" style="left:338.70px;top:715.28px" width="19" height="19" viewBox="0 0 19 19"><circle cx="9.5" cy="9.5" r="8.4" fill="none" stroke="#8d919c" stroke-width="1.8"/><path d="M9.5 5 V14 M5 9.5 H14" stroke="#8d919c" stroke-width="1.8"/></svg>
<div class="t kw" style="left:363px;top:717px;font-size:17.6px;color:#006dca">interactive dog toys<svg class="serp" width="16" height="14" viewBox="0 0 16 14"><rect x="0.9" y="0.9" width="14.2" height="12.2" fill="none" stroke="#8d919c" stroke-width="1.8"/><path d="M1 4.8 H15 M11.2 1 V4.8" stroke="#8d919c" stroke-width="1.6"/></svg><span class="kb"><i>#&#8202;15</i></span></div>
<div class="b ib" style="left:674.3px;top:715.08px;background:#fcdf86;color:#8f3d00">C</div>
<div class="t" style="right:742.00px;top:717.00px;font-size:17.6px;color:#191b23;">12,100</div>
<div class="t" style="right:628.50px;top:717.00px;font-size:17.6px;color:#191b23;">243</div>
<div class="t" style="right:558.00px;top:717.00px;font-size:17.6px;color:#191b23;">18</div>
<div class="b" style="left:1052.20px;top:717.08px;width:14.80px;height:14.80px;background:#5ad59f;border-radius:50%"></div>
<div class="t" style="right:463.20px;top:717.00px;font-size:17.6px;color:#191b23;">36</div>
<div class="b" style="left:1147.00px;top:717.08px;width:14.80px;height:14.80px;background:#fcc13d;border-radius:50%"></div>
<div class="t" style="right:339.20px;top:717.00px;font-size:17.6px;color:#191b23;">0.39</div>
<div class="t" style="right:271.70px;top:717.00px;font-size:17.6px;color:#191b23;">1.00</div>
<svg class="b" style="left:1348.00px;top:716.48px" width="18" height="16" viewBox="0 0 18 16"><path d="M1 14.5 V1.2 H17 V4.5" fill="none" stroke="#8d919c" stroke-width="1.8"/><path d="M1 2.2 H17" stroke="#8d919c" stroke-width="2.2"/><path d="M1 14.5 H6.5" stroke="#8d919c" stroke-width="1.8"/><circle cx="11.5" cy="10.2" r="3" fill="none" stroke="#8d919c" stroke-width="1.8"/><path d="M13.7 12.4 L16.3 15" stroke="#8d919c" stroke-width="1.9" stroke-linecap="round"/></svg>
<div class="b" style="left:1376.50px;top:712.98px;width:1.50px;height:23.00px;background:#e0e1e6"></div>
<div class="t" style="left:1387.40px;top:717.00px;font-size:17.6px;color:#525866;">6</div>
<div class="b" style="left:1387.40px;top:737.48px;width:9.60px;height:1.30px;background:repeating-linear-gradient(90deg,#8d919c 0 2px,transparent 2px 3.3px)"></div>
<div class="t" style="right:74.20px;top:717.00px;font-size:17.6px;color:#191b23;">3 weeks</div>
<svg class="b" style="left:1531.30px;top:715.48px" width="19" height="19" viewBox="0 0 19 19"><path d="M17.1 10.6 A7.5 7.5 0 1 1 14.9 4.3" fill="none" stroke="#0b6fd6" stroke-width="2.4" stroke-linecap="round"/><path d="M16.9 1.3 V6 H12.2" fill="none" stroke="#0b6fd6" stroke-width="2.4" stroke-linecap="round" stroke-linejoin="round"/></svg>
<!--row6:interactive dog toys|#15-->
<div class="b" style="left:278.00px;top:802.06px;width:1294.50px;height:1.50px;background:#e3e5eb"></div>
<div class="b" style="left:301.00px;top:767.30px;width:19.00px;height:19.00px;background:#fff;border:1.3px solid #c4c7cf;border-radius:4px;box-sizing:border-box"></div>
<svg class="b" style="left:338.70px;top:767.60px" width="19" height="19" viewBox="0 0 19 19"><circle cx="9.5" cy="9.5" r="8.4" fill="none" stroke="#8d919c" stroke-width="1.8"/><path d="M9.5 5 V14 M5 9.5 H14" stroke="#8d919c" stroke-width="1.8"/></svg>
<div class="t kw" style="left:363px;top:769px;font-size:17.6px;color:#006dca">toy of dog<svg class="serp" width="16" height="14" viewBox="0 0 16 14"><rect x="0.9" y="0.9" width="14.2" height="12.2" fill="none" stroke="#8d919c" stroke-width="1.8"/><path d="M1 4.8 H15 M11.2 1 V4.8" stroke="#8d919c" stroke-width="1.6"/></svg></div>
<div class="b ib" style="left:674.3px;top:767.40px;background:#c7e6fb;color:#0a5cc2">I</div>
<div class="b ib" style="left:698.3px;top:767.40px;background:#a3f2cf;color:#00604b">T</div>
<div class="t" style="right:742.00px;top:769.00px;font-size:17.6px;color:#191b23;">12,100</div>
<div class="t" style="right:628.50px;top:769.00px;font-size:17.6px;color:#191b23;">24</div>
<div class="t" style="right:558.00px;top:769.00px;font-size:17.6px;color:#191b23;">23</div>
<div class="b" style="left:1052.20px;top:769.40px;width:14.80px;height:14.80px;background:#5ad59f;border-radius:50%"></div>
<div class="t" style="right:463.20px;top:769.00px;font-size:17.6px;color:#191b23;">43</div>
<div class="b" style="left:1147.00px;top:769.40px;width:14.80px;height:14.80px;background:#fcc13d;border-radius:50%"></div>
<div class="t" style="right:339.20px;top:769.00px;font-size:17.6px;color:#191b23;">0.82</div>
<div class="t" style="right:271.70px;top:769.00px;font-size:17.6px;color:#191b23;">1.00</div>
<svg class="b" style="left:1348.00px;top:768.80px" width="18" height="16" viewBox="0 0 18 16"><path d="M1 14.5 V1.2 H17 V4.5" fill="none" stroke="#8d919c" stroke-width="1.8"/><path d="M1 2.2 H17" stroke="#8d919c" stroke-width="2.2"/><path d="M1 14.5 H6.5" stroke="#8d919c" stroke-width="1.8"/><circle cx="11.5" cy="10.2" r="3" fill="none" stroke="#8d919c" stroke-width="1.8"/><path d="M13.7 12.4 L16.3 15" stroke="#8d919c" stroke-width="1.9" stroke-linecap="round"/></svg>
<div class="b" style="left:1376.50px;top:765.30px;width:1.50px;height:23.00px;background:#e0e1e6"></div>
<div class="t" style="left:1387.40px;top:769.00px;font-size:17.6px;color:#525866;">7</div>
<div class="b" style="left:1387.40px;top:789.80px;width:9.60px;height:1.30px;background:repeating-linear-gradient(90deg,#8d919c 0 2px,transparent 2px 3.3px)"></div>
<div class="t" style="right:74.20px;top:769.00px;font-size:17.6px;color:#191b23;">3 weeks</div>
<svg class="b" style="left:1531.30px;top:767.80px" width="19" height="19" viewBox="0 0 19 19"><path d="M17.1 10.6 A7.5 7.5 0 1 1 14.9 4.3" fill="none" stroke="#0b6fd6" stroke-width="2.4" stroke-linecap="round"/><path d="M16.9 1.3 V6 H12.2" fill="none" stroke="#0b6fd6" stroke-width="2.4" stroke-linecap="round" stroke-linejoin="round"/></svg>
<!--row7:toy of dog|None-->
<div class="b" style="left:278.00px;top:854.38px;width:1294.50px;height:1.50px;background:#e3e5eb"></div>
<div class="b" style="left:301.00px;top:819.62px;width:19.00px;height:19.00px;background:#fff;border:1.3px solid #c4c7cf;border-radius:4px;box-sizing:border-box"></div>
<svg class="b" style="left:338.70px;top:819.92px" width="19" height="19" viewBox="0 0 19 19"><circle cx="9.5" cy="9.5" r="8.4" fill="none" stroke="#8d919c" stroke-width="1.8"/><path d="M9.5 5 V14 M5 9.5 H14" stroke="#8d919c" stroke-width="1.8"/></svg>
<div class="t kw" style="left:363px;top:822px;font-size:17.6px;color:#006dca">breed dog toys<svg class="serp" width="16" height="14" viewBox="0 0 16 14"><rect x="0.9" y="0.9" width="14.2" height="12.2" fill="none" stroke="#8d919c" stroke-width="1.8"/><path d="M1 4.8 H15 M11.2 1 V4.8" stroke="#8d919c" stroke-width="1.6"/></svg><span class="kb"><i>#&#8202;93</i></span></div>
<div class="b ib" style="left:674.3px;top:819.72px;background:#fcdf86;color:#8f3d00">C</div>
<div class="t" style="right:742.00px;top:822.00px;font-size:17.6px;color:#191b23;">9,900</div>
<div class="t" style="right:628.50px;top:822.00px;font-size:17.6px;color:#191b23;">37</div>
<div class="t" style="right:558.00px;top:822.00px;font-size:17.6px;color:#191b23;">13</div>
<div class="b" style="left:1052.20px;top:821.72px;width:14.80px;height:14.80px;background:#00a082;border-radius:50%"></div>
<div class="t" style="right:463.20px;top:822.00px;font-size:17.6px;color:#191b23;">23</div>
<div class="b" style="left:1147.00px;top:821.72px;width:14.80px;height:14.80px;background:#5ad59f;border-radius:50%"></div>
<div class="t" style="right:339.20px;top:822.00px;font-size:17.6px;color:#191b23;">0.15</div>
<div class="t" style="right:271.70px;top:822.00px;font-size:17.6px;color:#191b23;">0.20</div>
<svg class="b" style="left:1348.00px;top:821.12px" width="18" height="16" viewBox="0 0 18 16"><path d="M1 14.5 V1.2 H17 V4.5" fill="none" stroke="#8d919c" stroke-width="1.8"/><path d="M1 2.2 H17" stroke="#8d919c" stroke-width="2.2"/><path d="M1 14.5 H6.5" stroke="#8d919c" stroke-width="1.8"/><circle cx="11.5" cy="10.2" r="3" fill="none" stroke="#8d919c" stroke-width="1.8"/><path d="M13.7 12.4 L16.3 15" stroke="#8d919c" stroke-width="1.9" stroke-linecap="round"/></svg>
<div class="b" style="left:1376.50px;top:817.62px;width:1.50px;height:23.00px;background:#e0e1e6"></div>
<div class="t" style="left:1387.40px;top:822.00px;font-size:17.6px;color:#525866;">6</div>
<div class="b" style="left:1387.40px;top:842.12px;width:9.60px;height:1.30px;background:repeating-linear-gradient(90deg,#8d919c 0 2px,transparent 2px 3.3px)"></div>
<div class="t" style="right:74.20px;top:822.00px;font-size:17.6px;color:#191b23;">3 weeks</div>
<svg class="b" style="left:1531.30px;top:820.12px" width="19" height="19" viewBox="0 0 19 19"><path d="M17.1 10.6 A7.5 7.5 0 1 1 14.9 4.3" fill="none" stroke="#0b6fd6" stroke-width="2.4" stroke-linecap="round"/><path d="M16.9 1.3 V6 H12.2" fill="none" stroke="#0b6fd6" stroke-width="2.4" stroke-linecap="round" stroke-linejoin="round"/></svg>
<!--row8:breed dog toys|#93-->
<div class="b" style="left:278.00px;top:906.70px;width:1294.50px;height:1.50px;background:#e3e5eb"></div>
<div class="b" style="left:301.00px;top:871.94px;width:19.00px;height:19.00px;background:#fff;border:1.3px solid #c4c7cf;border-radius:4px;box-sizing:border-box"></div>
<svg class="b" style="left:338.70px;top:872.24px" width="19" height="19" viewBox="0 0 19 19"><circle cx="9.5" cy="9.5" r="8.4" fill="none" stroke="#8d919c" stroke-width="1.8"/><path d="M9.5 5 V14 M5 9.5 H14" stroke="#8d919c" stroke-width="1.8"/></svg>
<div class="t kw" style="left:363px;top:874px;font-size:17.6px;color:#006dca">lamb chop dog toy<svg class="serp" width="16" height="14" viewBox="0 0 16 14"><rect x="0.9" y="0.9" width="14.2" height="12.2" fill="none" stroke="#8d919c" stroke-width="1.8"/><path d="M1 4.8 H15 M11.2 1 V4.8" stroke="#8d919c" stroke-width="1.6"/></svg></div>
<div class="b ib" style="left:674.3px;top:872.04px;background:#fcdf86;color:#8f3d00">C</div>
<div class="t" style="right:742.00px;top:874.00px;font-size:17.6px;color:#191b23;">9,900</div>
<div class="t" style="right:628.50px;top:874.00px;font-size:17.6px;color:#191b23;">19</div>
<div class="t" style="right:558.00px;top:874.00px;font-size:17.6px;color:#191b23;">31</div>
<div class="b" style="left:1052.20px;top:874.04px;width:14.80px;height:14.80px;background:#fcc13d;border-radius:50%"></div>
<div class="t" style="right:463.20px;top:874.00px;font-size:17.6px;color:#191b23;">49</div>
<div class="b" style="left:1147.00px;top:874.04px;width:14.80px;height:14.80px;background:#fcc13d;border-radius:50%"></div>
<div class="t" style="right:339.20px;top:874.00px;font-size:17.6px;color:#191b23;">0.45</div>
<div class="t" style="right:271.70px;top:874.00px;font-size:17.6px;color:#191b23;">1.00</div>
<svg class="b" style="left:1348.00px;top:873.44px" width="18" height="16" viewBox="0 0 18 16"><path d="M1 14.5 V1.2 H17 V4.5" fill="none" stroke="#8d919c" stroke-width="1.8"/><path d="M1 2.2 H17" stroke="#8d919c" stroke-width="2.2"/><path d="M1 14.5 H6.5" stroke="#8d919c" stroke-width="1.8"/><circle cx="11.5" cy="10.2" r="3" fill="none" stroke="#8d919c" stroke-width="1.8"/><path d="M13.7 12.4 L16.3 15" stroke="#8d919c" stroke-width="1.9" stroke-linecap="round"/></svg>
<div class="b" style="left:1376.50px;top:869.94px;width:1.50px;height:23.00px;background:#e0e1e6"></div>
<div class="t" style="left:1387.40px;top:874.00px;font-size:17.6px;color:#525866;">7</div>
<div class="b" style="left:1387.40px;top:894.44px;width:9.60px;height:1.30px;background:repeating-linear-gradient(90deg,#8d919c 0 2px,transparent 2px 3.3px)"></div>
<div class="t" style="right:74.20px;top:874.00px;font-size:17.6px;color:#191b23;">3 weeks</div>
<svg class="b" style="left:1531.30px;top:872.44px" width="19" height="19" viewBox="0 0 19 19"><path d="M17.1 10.6 A7.5 7.5 0 1 1 14.9 4.3" fill="none" stroke="#0b6fd6" stroke-width="2.4" stroke-linecap="round"/><path d="M16.9 1.3 V6 H12.2" fill="none" stroke="#0b6fd6" stroke-width="2.4" stroke-linecap="round" stroke-linejoin="round"/></svg>
<!--row9:lamb chop dog toy|None-->
<div class="b" style="left:278.00px;top:959.02px;width:1294.50px;height:1.50px;background:#e3e5eb"></div>
<div class="b" style="left:301.00px;top:924.26px;width:19.00px;height:19.00px;background:#fff;border:1.3px solid #c4c7cf;border-radius:4px;box-sizing:border-box"></div>
<svg class="b" style="left:338.70px;top:924.56px" width="19" height="19" viewBox="0 0 19 19"><circle cx="9.5" cy="9.5" r="8.4" fill="none" stroke="#8d919c" stroke-width="1.8"/><path d="M9.5 5 V14 M5 9.5 H14" stroke="#8d919c" stroke-width="1.8"/></svg>
<div class="t kw" style="left:363px;top:926px;font-size:17.6px;color:#006dca">dog chew toys<svg class="serp" width="16" height="14" viewBox="0 0 16 14"><rect x="0.9" y="0.9" width="14.2" height="12.2" fill="none" stroke="#8d919c" stroke-width="1.8"/><path d="M1 4.8 H15 M11.2 1 V4.8" stroke="#8d919c" stroke-width="1.6"/></svg></div>
<div class="b ib" style="left:674.3px;top:924.36px;background:#fcdf86;color:#8f3d00">C</div>
<div class="t" style="right:742.00px;top:926.00px;font-size:17.6px;color:#191b23;">8,100</div>
<div class="t" style="right:628.50px;top:926.00px;font-size:17.6px;color:#191b23;">16</div>
<div class="t" style="right:558.00px;top:926.00px;font-size:17.6px;color:#191b23;">17</div>
<div class="b" style="left:1052.20px;top:926.36px;width:14.80px;height:14.80px;background:#5ad59f;border-radius:50%"></div>
<div class="t" style="right:463.20px;top:926.00px;font-size:17.6px;color:#191b23;">35</div>
<div class="b" style="left:1147.00px;top:926.36px;width:14.80px;height:14.80px;background:#fcc13d;border-radius:50%"></div>
<div class="t" style="right:339.20px;top:926.00px;font-size:17.6px;color:#191b23;">0.96</div>
<div class="t" style="right:271.70px;top:926.00px;font-size:17.6px;color:#191b23;">0.28</div>
<svg class="b" style="left:1348.00px;top:925.76px" width="18" height="16" viewBox="0 0 18 16"><path d="M1 14.5 V1.2 H17 V4.5" fill="none" stroke="#8d919c" stroke-width="1.8"/><path d="M1 2.2 H17" stroke="#8d919c" stroke-width="2.2"/><path d="M1 14.5 H6.5" stroke="#8d919c" stroke-width="1.8"/><circle cx="11.5" cy="10.2" r="3" fill="none" stroke="#8d919c" stroke-width="1.8"/><path d="M13.7 12.4 L16.3 15" stroke="#8d919c" stroke-width="1.9" stroke-linecap="round"/></svg>
<div class="b" style="left:1376.50px;top:922.26px;width:1.50px;height:23.00px;background:#e0e1e6"></div>
<div class="t" style="left:1387.40px;top:926.00px;font-size:17.6px;color:#525866;">7</div>
<div class="b" style="left:1387.40px;top:946.76px;width:9.60px;height:1.30px;background:repeating-linear-gradient(90deg,#8d919c 0 2px,transparent 2px 3.3px)"></div>
<div class="t" style="right:74.20px;top:926.00px;font-size:17.6px;color:#191b23;">3 weeks</div>
<svg class="b" style="left:1531.30px;top:924.76px" width="19" height="19" viewBox="0 0 19 19"><path d="M17.1 10.6 A7.5 7.5 0 1 1 14.9 4.3" fill="none" stroke="#0b6fd6" stroke-width="2.4" stroke-linecap="round"/><path d="M16.9 1.3 V6 H12.2" fill="none" stroke="#0b6fd6" stroke-width="2.4" stroke-linecap="round" stroke-linejoin="round"/></svg>
<!--row10:dog chew toys|None-->
<div class="b" style="left:986.00px;top:318.00px;width:96.00px;height:682.00px;border:6px solid #b37cf6;border-bottom:none;box-sizing:border-box"></div>
<div class="b" style="left:0.00px;top:909.00px;width:1600.00px;height:44.00px;background:linear-gradient(180deg,rgba(255,255,255,0) 0px,rgba(255,255,255,1) 38px)"></div>
</body></html>
